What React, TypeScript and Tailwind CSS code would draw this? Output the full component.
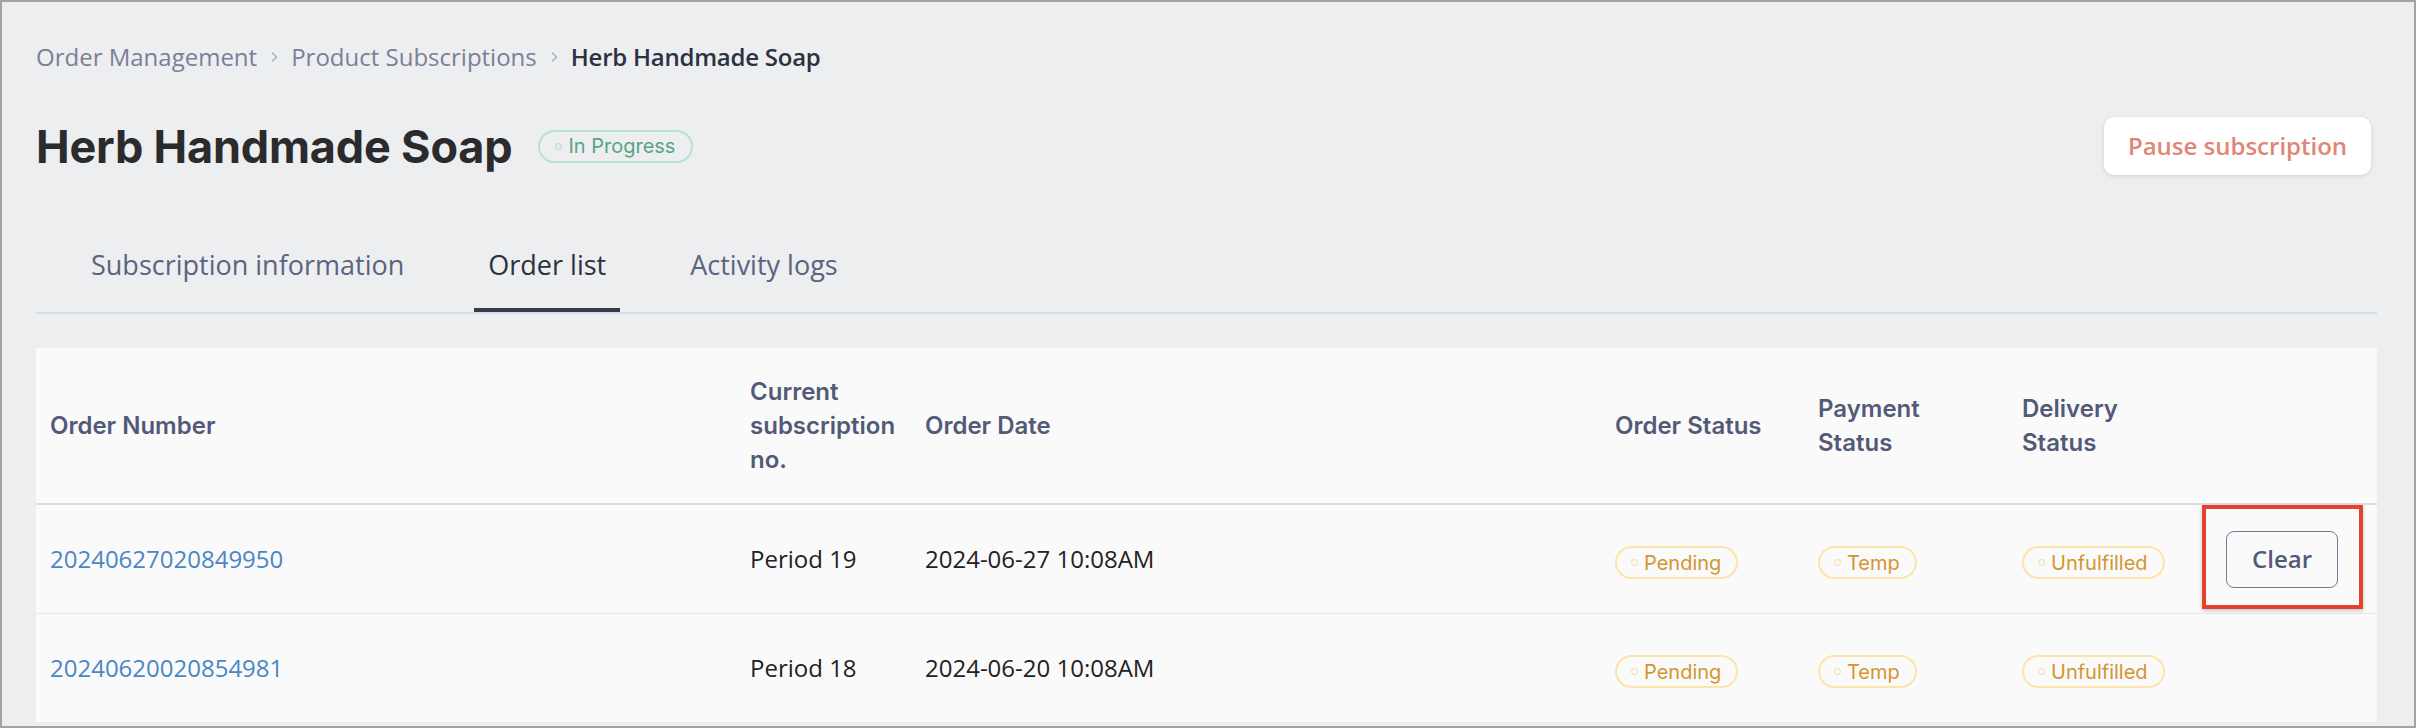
import React from "react";

const inter = "font-['Inter',sans-serif]";
const open = "font-['Open_Sans',sans-serif]";

function Badge({ label, tone }: { label: string; tone: "green" | "amber" }) {
  const cls =
    tone === "green"
      ? "border-[#b7e2cf] text-[#56a585] pl-[15px] pr-[16px]"
      : "border-[#fde4a8] text-[#d3962f] pl-[14px] pr-[15px]";
  const dot = tone === "green" ? "border-[#a9d8c3]" : "border-[#f7d89a]";
  return (
    <span
      className={`inline-flex h-[33px] items-center gap-[6px] rounded-full border-2 bg-transparent text-[20px] leading-none ${inter} ${cls}`}
    >
      <span className={`h-[7px] w-[7px] rounded-full border ${dot}`} />
      <span>{label}</span>
    </span>
  );
}

const cols = "grid grid-cols-[700px_175px_690px_203px_204px_204px_1fr]";

const rows = [
  { no: "20240627020849950", period: "Period 19", date: "2024-06-27 10:08AM", clear: true },
  { no: "20240620020854981", period: "Period 18", date: "2024-06-20 10:08AM", clear: false },
];

function Chevron() {
  return (
    <span className="mx-[12px] flex items-center">
      <svg width="10" height="14" viewBox="0 0 10 14" fill="none">
        <path d="M3 2.5 L7.5 7 L3 11.5" stroke="#aab0bf" strokeWidth="1.4" />
      </svg>
    </span>
  );
}

export default function App() {
  return (
    <div className="h-[728px] w-[2416px] overflow-hidden border-2 border-[#a3a3a3] bg-[#edeef0]">
      <div className="pl-[34px] pr-[37px] pt-[39px]">
        {/* Breadcrumb */}
        <div className={`flex h-[32px] items-center text-[24px] ${open}`}>
          <span className="text-[#7a8099]">Order Management</span>
          <Chevron />
          <span className="text-[#7a8099]">Product Subscriptions</span>
          <Chevron />
          <span className="font-semibold tracking-[-0.01em] text-[#2c3142]">Herb Handmade Soap</span>
        </div>

        {/* Title row */}
        <div className="mt-[44px] flex h-[58px] items-center justify-between">
          <div className="flex items-center gap-[26px]">
            <h1 className={`text-[45px] font-bold leading-none tracking-[-0.004em] text-[#2b2b2e] ${inter}`}>
              Herb Handmade Soap
            </h1>
            <Badge label="In Progress" tone="green" />
          </div>
          <button
            className={`mr-[6px] h-[58px] w-[267px] rounded-[10px] bg-white text-[24px] font-semibold text-[#df8677] shadow-[0_1px_4px_rgba(0,0,0,0.12)] ${open}`}
          >
            Pause subscription
          </button>
        </div>

        {/* Tabs */}
        <div className="mt-[45px] border-b-2 border-[#d6dde4]">
          <div className={`flex gap-[57px] pl-[42px] text-[27px] ${open}`}>
            <div className="flex h-[92px] items-center border-b-4 border-transparent px-[13px] pt-[2px] text-[#5b6381]">
              Subscription information
            </div>
            <div className="flex h-[92px] items-center border-b-4 border-[#363b4c] px-[14px] pt-[2px] text-[#2c3142]">
              Order list
            </div>
            <div className="flex h-[92px] items-center border-b-4 border-transparent px-[13px] pt-[2px] text-[#5b6381]">
              Activity logs
            </div>
          </div>
        </div>

        {/* Table */}
        <div className="mt-[34px] bg-[#fafafa]">
          <div
            className={`${cols} h-[157px] items-center border-b-2 border-[#d6dde4] text-[24px] font-semibold leading-[34px] text-[#525a77] ${inter}`}
          >
            <div className="px-[14px]">Order Number</div>
            <div className="px-[14px]">Current subscription no.</div>
            <div className="px-[14px]">Order Date</div>
            <div className="px-[14px]">Order Status</div>
            <div className="px-[14px]">
              Payment
              <br />
              Status
            </div>
            <div className="px-[14px]">
              Delivery
              <br />
              Status
            </div>
            <div />
          </div>
          {rows.map((r) => (
            <div
              key={r.no}
              className={`${cols} h-[109px] items-center border-b border-[#e7e9ec] text-[24px] text-[#222222] ${open}`}
            >
              <div className="px-[14px] text-[#4a86c5]">{r.no}</div>
              <div className="px-[14px]">{r.period}</div>
              <div className="px-[14px]">{r.date}</div>
              <div className="px-[14px]">
                <Badge label="Pending" tone="amber" />
              </div>
              <div className="px-[14px]">
                <Badge label="Temp" tone="amber" />
              </div>
              <div className="px-[14px]">
                <Badge label="Unfulfilled" tone="amber" />
              </div>
              <div className="relative h-full px-[14px]">
                {r.clear && (
                  <>
                    <div className="flex h-full items-center">
                      <button
                        className={`h-[57px] w-[112px] rounded-[8px] border border-[#737a94] bg-[#fafafa] text-[24px] font-semibold text-[#525a77] ${open}`}
                      >
                        Clear
                      </button>
                    </div>
                    <div className="pointer-events-none absolute left-[-10px] top-0 h-[104px] w-[161px] border-4 border-[#e2432a] shadow-[0_2px_4px_rgba(0,0,0,0.2)]" />
                  </>
                )}
              </div>
            </div>
          ))}
        </div>
      </div>
    </div>
  );
}
